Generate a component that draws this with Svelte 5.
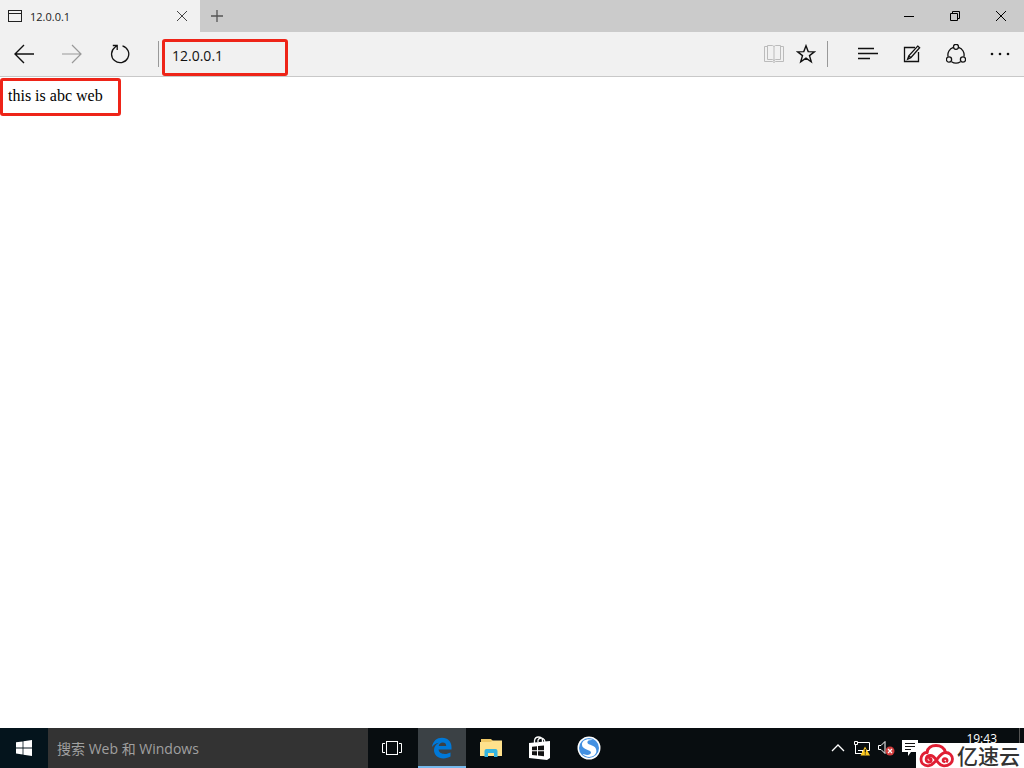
<script>
  let address = '12.0.0.1';
  let search = '';
  const tabTitle = '12.0.0.1';
  const time = '19:43';
</script>

<div class="desktop">
  <header class="tab-bar">
    <div class="tab">
      <svg width="14" height="12" viewBox="0 0 14 12" fill="none" stroke="#222">
        <rect x=".5" y=".5" width="13" height="11" />
        <path d="M1 3.5h12" />
      </svg>
      <span class="tab-title">{tabTitle}</span>
      <button class="tab-close" aria-label="Close tab">
        <svg width="12" height="12" viewBox="0 0 12 12" fill="none" stroke="#444"><path d="M1 1l10 10M11 1L1 11" /></svg>
      </button>
    </div>
    <button class="new-tab" aria-label="New tab">
      <svg width="12" height="12" viewBox="0 0 12 12" fill="none" stroke="#555" stroke-width="1.3"><path d="M6 0v12M0 6h12" /></svg>
    </button>
    <div class="window-controls">
      <button aria-label="Minimize">
        <svg width="10" height="10" viewBox="0 0 10 10" stroke="#000"><path d="M0 5.5h10" /></svg>
      </button>
      <button aria-label="Restore">
        <svg width="10" height="10" viewBox="0 0 10 10" fill="none" stroke="#000"><path d="M.5 2.5h7v7h-7zM2.5 2.5v-2h7v7h-2" /></svg>
      </button>
      <button aria-label="Close">
        <svg width="10" height="10" viewBox="0 0 10 10" fill="none" stroke="#000"><path d="M0 0l10 10M10 0L0 10" /></svg>
      </button>
    </div>
  </header>

  <div class="toolbar">
    <button class="nav-button" aria-label="Back">
      <svg width="20" height="20" viewBox="0 0 20 20" fill="none" stroke="#111" stroke-width="1.4"><path d="M20 10H1M10 1l-9 9 9 9" /></svg>
    </button>
    <button class="nav-button" aria-label="Forward">
      <svg width="20" height="20" viewBox="0 0 20 20" fill="none" stroke="#999" stroke-width="1.2"><path d="M0 10h19M10 1l9 9-9 9" /></svg>
    </button>
    <button class="nav-button" aria-label="Refresh">
      <svg width="20" height="20" viewBox="0 0 20 20" fill="none" stroke="#111" stroke-width="1.3">
        <path d="M12.500 1.800A8.600 8.600 0 1 1 5 3.200L7 1.600M2.800 1.500h4.400v4.400" />
      </svg>
    </button>
    <span class="divider address-divider"></span>
    <div class="address">
      <input type="text" aria-label="Address" bind:value={address} />
    </div>
    <div class="tools">
      <button class="page-button" aria-label="Reading view">
        <svg width="20" height="20" viewBox="0 0 20 20" fill="none" stroke="#bbb">
          <path d="M3.5 2.5h-3v15h8l1.5 1 1.5-1h8v-15h-3" />
          <path d="M10 2.500v15M3.500 1.500h5l1.500 1 1.500-1h5v14h-5l-1.500 1-1.500-1h-5z" />
        </svg>
      </button>
      <button class="page-button" aria-label="Add to favorites">
        <svg width="20" height="20" viewBox="0 0 20 20" fill="none" stroke="#111" stroke-width="1.4">
          <path d="M10 1.8l2.2 5.8 6.2.2-4.9 3.8 1.8 6.2-5.3-3.6-5.3 3.6 1.8-6.2-4.9-3.8 6.2-.2z" />
        </svg>
      </button>
      <span class="divider"></span>
      <div class="menu">
        <button aria-label="Hub">
          <svg width="20" height="20" viewBox="0 0 20 20" stroke="#111" stroke-width="1.3"><path d="M0 4.5h16M0 9.5h20M0 14.5h12" /></svg>
        </button>
        <button aria-label="Web note">
          <svg width="20" height="20" viewBox="0 0 20 20" fill="none" stroke="#111" stroke-width="1.3">
            <path d="M13 3.5H2.5v14h14V8" />
            <path d="M15.7 2.1l1.900 1.600L8.800 13.600l-3.200 1.600 1.200-3.300z" />
            <path d="M6.800 11.900l2 1.700" />
          </svg>
        </button>
        <button aria-label="Share">
          <svg width="20" height="20" viewBox="0 0 20 20" fill="none" stroke="#111" stroke-width="1.3">
            <path d="M7.4 3.3a8 8 0 0 0-5.300 9.400M12.600 3.300a8 8 0 0 1 5.300 9.400M5.500 17.700a8.200 8.200 0 0 0 9 0" />
            <circle cx="10" cy="2.8" r="2.500" />
            <circle cx="3" cy="15.500" r="2.600" />
            <circle cx="17" cy="15.500" r="2.600" />
          </svg>
        </button>
        <button aria-label="More">
          <svg width="20" height="20" viewBox="0 0 20 20" fill="#111">
            <circle cx="2" cy="10" r="1.300" /><circle cx="10" cy="10" r="1.300" /><circle cx="18" cy="10" r="1.300" />
          </svg>
        </button>
      </div>
    </div>
  </div>

  <main class="page">
    <p>this is abc web</p>
  </main>

  <footer class="taskbar">
    <button class="start" aria-label="Start">
      <svg width="16" height="16" viewBox="0 0 16 16" fill="#fff">
        <path d="M0 2.3l6.6-.9v6.1H0zM7.4 1.3L16 0v7.5H7.4zM0 8.400h6.600v6.100L0 13.600zM7.400 8.400H16V16l-8.600-1.300z" />
      </svg>
    </button>
    <input class="search" type="text" aria-label="搜索" placeholder="搜索 Web 和 Windows" bind:value={search} />

    <nav class="apps">
      <button aria-label="Task view">
        <svg width="22" height="16" viewBox="0 0 22 16" fill="none" stroke="#fff">
          <rect x="4.500" y="1.500" width="11" height="13" />
          <path d="M3 3.500H.5v9H3M17 3.500h2.500v9H17" />
        </svg>
      </button>
      <button class="active" aria-label="Edge">
        <svg width="22" height="22" viewBox="0 0 22 22" fill="#0078d7">
          <path d="M1 10C1.900 4 6 .8 11 .8c6 0 9.500 4.200 9.500 9.200v2.500H7.600c.2 3.200 3.100 4.400 6.100 4.400 2.200 0 4.100-.6 5.800-1.500v4.200c-2 1.200-4.400 1.800-7.100 1.800-5.800 0-9.400-3.500-9.400-8.300 0-3.400 1.900-6 5-7.400C4.900 6.200 2.600 7.500 1 10zM7.700 9h7.500c0-2.400-1.300-3.500-3.500-3.500-2.100 0-3.600 1.300-4 3.500z" />
        </svg>
      </button>
      <button aria-label="File explorer">
        <svg width="22" height="20" viewBox="0 0 22 20">
          <path d="M1 1h10l2 2h8v15H1z" fill="#f0c866" />
          <path d="M0 4h11l1.500-1.500H22V18H0z" fill="#ffe18c" />
          <path d="M4.500 13q0-2 2-2h9q2 0 2 2v6h-3.500v-4h-6v4H4.500z" fill="#35b4df" />
        </svg>
      </button>
      <button aria-label="Store">
        <svg width="22" height="24" viewBox="0 0 22 24">
          <path d="M5.500 7V4.500Q6 1 9.500 1q3 0 4 2.500V7M9 6V4q1.500-3 5-1.500 2 1 2 4" fill="none" stroke="#fff" stroke-width="1.300" />
          <path d="M0 7l21-2v17l-3 2L0 22z" fill="#fff" />
          <path d="M3 10.800l5-.6v4H3zM9 10l6-.6v4.800H9zM3 15.200h5v4.300l-5-.5zM9 15.200h6v5.100l-6-.7z" fill="#111" />
        </svg>
      </button>
      <button aria-label="Sogou">
        <svg width="24" height="24" viewBox="0 0 24 24">
          <circle cx="12" cy="12" r="11.500" fill="#fff" />
          <circle cx="12" cy="12" r="10" fill="#4290e2" />
          <path d="M17.500 4.500C11 1.500 4.500 4 5 9c.5 5 9 4.500 9 7.500 0 2.500-4.500 3.300-8.500 1.300 3.500 5 13.700 4 13.900-2.800.2-6.500-9-5.500-9-8.500 0-2.500 3.600-3 7.100-2z" fill="#fff" />
        </svg>
      </button>
    </nav>

    <div class="tray">
      <button aria-label="Show hidden icons">
        <svg width="14" height="14" viewBox="0 0 14 14" fill="none" stroke="#fff" stroke-width="1.300"><path d="M1 10l6-6 6 6" /></svg>
      </button>
      <button aria-label="Network">
        <svg width="18" height="16" viewBox="0 0 18 16">
          <path d="M5 2.500h11.500v8H5M2.500 5v8M2 13.500h8M9.500 11v2" fill="none" stroke="#fff" />
          <path d="M1.500 1.500h3v3h-3z" fill="#111" stroke="#fff" />
          <path d="M12 6.500L17 15.500H7.500z" fill="#ffcb20" />
          <path d="M12.300 9v3.500M12.300 13.500v1" stroke="#222" stroke-width="1.200" />
        </svg>
      </button>
      <button aria-label="Volume">
        <svg width="18" height="16" viewBox="0 0 18 16">
          <path d="M1.500 5.500H4l4-4v12l-4-4H1.500z" fill="none" stroke="#fff" />
          <circle cx="13" cy="11" r="4.500" fill="#d13c3c" />
          <path d="M11 9l4 4M15 9l-4 4" stroke="#fff" stroke-width="1.200" />
        </svg>
      </button>
      <button aria-label="Notifications">
        <svg width="16" height="16" viewBox="0 0 16 16">
          <path d="M0 0h16v12H9l-3 4v-4H0z" fill="#fff" />
          <path d="M3 3.500h10M3 6.500h10M3 9.500h6" stroke="#111" />
        </svg>
      </button>
      <button aria-label="Input method">
        <svg width="12" height="14" viewBox="0 0 12 14" fill="none" stroke="#fff"><path d="M4.500 2v3M7.500 2v3M1 6.500h10M6 7v6" /></svg>
      </button>
      <time>{time}</time>
      <span class="show-desktop"></span>
    </div>
  </footer>

  <div class="watermark">
    <svg width="36" height="25" viewBox="0 0 36 25" fill="none" stroke="#e01f34" stroke-width="3" stroke-linecap="round">
      <path d="M8 9.500C8.500 5 12.500 2.500 17 2.500S25.500 5 26.500 9.500" />
      <path d="M10.500 15.500c2 0 2.500 3 0 3.500-2 .3-3.500-1-3.300-3 .2-2.300 2.200-3.500 4.300-3.500 6 0 6 10.300 13.500 10.300 5 0 8.500-3 8.500-6.800 0-3.600-3-6.500-6.800-6.500C19 9.500 17.500 22.800 9 22.800c-4.500 0-7-3-7-6.700C2 12.500 4.500 9.500 8 9.500" stroke-width="2.800" />
      <path d="M25.500 18.800c-2 0-2.300-3 .3-3.300 2.200-.2 3 1.800 2.200 3" stroke-width="2.400" />
    </svg>
    <span>亿速云</span>
  </div>
</div>

<style>
  :global(body) {
    margin: 0;
  }

  .desktop {
    position: relative;
    display: flex;
    flex-direction: column;
    min-height: 100vh;
    background: #fff;
    font-family: 'Open Sans', 'Noto Sans CJK SC', sans-serif;
  }

  button {
    display: flex;
    align-items: center;
    justify-content: center;
    padding: 0;
    border: none;
    background: none;
  }

  svg {
    display: block;
    flex-shrink: 0;
  }

  input {
    min-width: 0;
    box-sizing: border-box;
    border: none;
    outline: none;
    font-family: inherit;
  }

  .tab-bar {
    display: flex;
    height: 32px;
    background: #cbcbcb;
  }

  .tab {
    display: flex;
    align-items: center;
    gap: 8px;
    width: 200px;
    box-sizing: border-box;
    padding: 0 8px;
    background: #f1f1f1;
  }

  .tab-title {
    flex: 1;
    font-size: 11px;
    color: #222;
  }

  .tab-close {
    width: 20px;
    height: 20px;
  }

  .new-tab {
    width: 34px;
  }

  .window-controls {
    display: flex;
    margin-left: auto;
  }

  .window-controls button {
    width: 46px;
  }

  .toolbar {
    display: flex;
    align-items: center;
    height: 44px;
    background: #f1f1f1;
    border-bottom: 1px solid #c8c8c8;
  }

  .nav-button {
    width: 48px;
    height: 44px;
  }

  .divider {
    width: 1px;
    height: 26px;
    background: #999;
  }

  .address-divider {
    margin-left: 14px;
  }

  .address {
    margin: 7px 0 0 3px;
    border: 3px solid #ee2418;
    border-radius: 3px;
  }

  .address input {
    display: block;
    width: 120px;
    height: 31px;
    padding: 0 7px 4px;
    background: transparent;
    font-size: 14px;
    color: #111;
  }

  .tools {
    display: flex;
    align-items: center;
    margin-left: auto;
    padding-right: 2px;
  }

  .page-button {
    width: 32px;
    height: 44px;
  }

  .tools .divider {
    margin: 0 18px 0 5px;
  }

  .menu {
    display: flex;
  }

  .menu button {
    width: 44px;
    height: 44px;
  }

  .page {
    flex: 1;
    padding-top: 1px;
  }

  .page p {
    width: fit-content;
    margin: 0;
    padding: 5px 15px 8px 5px;
    border: 3px solid #ee2418;
    border-radius: 3px;
    font: 16px/19px 'Liberation Serif', serif;
    color: #000;
  }

  .taskbar {
    display: flex;
    height: 40px;
    background: #080d10;
  }

  .start {
    width: 48px;
    background: #04141c;
  }

  .search {
    width: 320px;
    padding: 0 9px;
    background: #333;
    color: #fff;
    font-size: 14px;
  }

  .search::placeholder {
    color: #a0a0a0;
    opacity: 1;
  }

  .apps {
    display: flex;
    gap: 1px;
    margin-left: 1px;
  }

  .apps button {
    width: 48px;
    box-sizing: border-box;
  }

  .apps .active {
    padding-top: 2px;
    background: #3b4145;
    border-bottom: 2px solid #76b9ed;
  }

  .tray {
    display: flex;
    margin-left: auto;
  }

  .tray button {
    width: 24px;
  }

  time {
    margin: 3px 22px 0 20px;
    color: #fff;
    font-size: 12px;
    line-height: 16px;
  }

  .show-desktop {
    width: 4px;
    border-left: 1px solid #555;
  }

  .watermark {
    position: absolute;
    right: 0;
    bottom: 0;
    display: flex;
    align-items: center;
    gap: 2px;
    height: 25px;
    padding: 0 4px 0 3px;
    background: #fff;
    color: #333;
    font: 500 21px/25px 'Noto Sans CJK SC', sans-serif;
  }
</style>
